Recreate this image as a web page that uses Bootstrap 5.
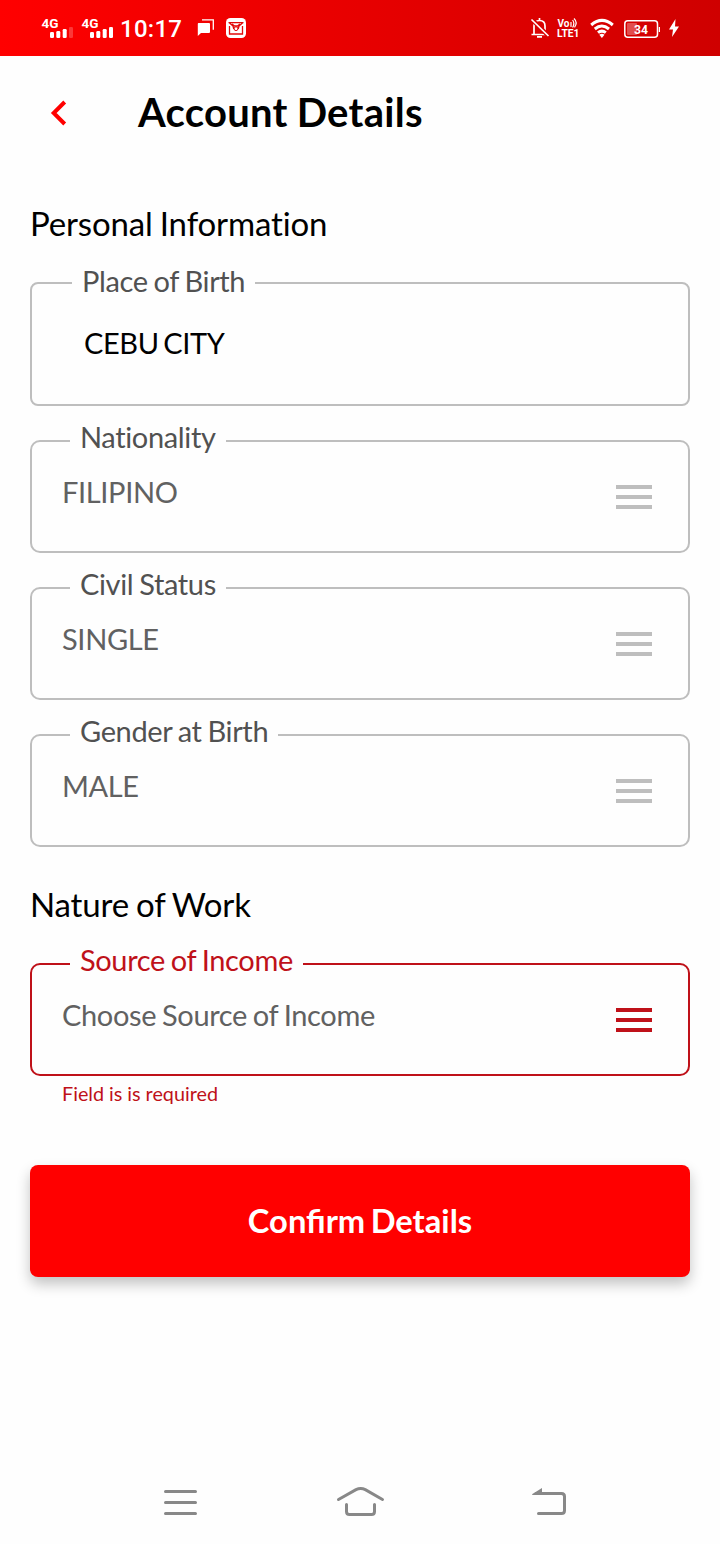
<!DOCTYPE html>
<html lang="en">
<head>
<meta charset="utf-8">
<meta name="viewport" content="width=device-width, initial-scale=1">
<title>Account Details</title>
<link href="https://cdn.jsdelivr.net/npm/bootstrap@5.3.0/dist/css/bootstrap.min.css" rel="stylesheet">
<style>
  body { font-family: Lato, sans-serif; color: #000; background: #fefefe; height: 1544px; overflow: hidden; }
  .status { height: 56px; background: linear-gradient(90deg, #ff0000, #cf0000); }
  .status svg, .tabs svg { display: block; }
  .status text { font-family: Roboto, sans-serif; fill: #fff; }
  .topbar { height: 112px; padding-left: 46px; }
  .topbar h1 { font-size: 40px; font-weight: 700; line-height: 48px; margin: 0 0 0 67px; letter-spacing: .27px; word-spacing: -1px; }
  .page-body { padding: 0 30px; }
  .group-title { font-size: 33px; font-weight: 400; line-height: 110px; margin: 0; padding-bottom: 4px; letter-spacing: -.14px; word-spacing: -1.3px; }
  .group-title.work { line-height: 114px; padding-bottom: 2px; }
  .field { height: 113px; border: 2px solid #bebebe; border-radius: 10px; margin-bottom: 34px; padding: 0 36px 0 30px; color: #616161; font-size: 29px; letter-spacing: -.36px; word-spacing: -1.2px; }
  .field label { position: absolute; left: 38px; top: -23px; line-height: 36px; padding: 0 10px; background: #fefefe; color: #515151; white-space: nowrap; }
  .field .val { line-height: 36px; margin-top: -10px; }
  .field svg { margin-top: 1px; fill: #bebebe; }
  .field.tall { height: 124px; border-radius: 8px; padding-left: 52px; color: #000; }
  .field.tall label { left: 40px; top: -21px; }
  .field.tall .val { margin-top: -2px; letter-spacing: -.4px; word-spacing: -2.4px; }
  .field.bad { border-color: #bf1119; margin-bottom: 0; }
  .field.bad label { color: #bf1119; }
  .field.bad svg { fill: #bf1119; }
  .error { font-size: 19.800px; line-height: 34px; color: #bf1119; padding-left: 32px; margin: 0 0 55px; word-spacing: -.1px; }
  .btn-confirm, .btn-confirm:hover { height: 112px; border: 0; border-radius: 8px; background: #f00; color: #fff; font-size: 32.700px; font-weight: 700; word-spacing: -2.500px; box-shadow: 0 7px 14px rgba(0,0,0,.24); }
  .tabs { height: 84px; padding: 0 150px 0 160px; }
</style>
</head>
<body class="d-flex flex-column">
<header class="status">
  <svg width="720" height="56" viewBox="0 0 720 56">
    <text x="41.500" y="28" font-size="13.500" font-weight="700" textLength="17" lengthAdjust="spacingAndGlyphs">4G</text>
    <g fill="#fff">
      <rect x="50" y="32" width="4" height="6" rx="1.3"/><rect x="56.300" y="31" width="4" height="7" rx="1.3"/><rect x="62.700" y="29" width="4" height="9" rx="1.3"/><rect x="69" y="27" width="4" height="11" rx="1.3" opacity=".22"/>
      <rect x="90" y="32" width="4" height="6" rx="1.3"/><rect x="96.300" y="31" width="4" height="7" rx="1.3"/><rect x="102.700" y="29" width="4" height="9" rx="1.3"/><rect x="109" y="27" width="4" height="11" rx="1.3"/>
    </g>
    <text x="81.500" y="28" font-size="13.500" font-weight="700" textLength="17" lengthAdjust="spacingAndGlyphs">4G</text>
    <text x="120" y="37" font-size="24" font-weight="500" textLength="62">10:17</text>
    <!-- message -->
    <path d="M198.500 23h10.500q1 0 1 1v8q0 1-1 1h-8l-3.200 3v-12q0-1 .7-1z" fill="#fff"/>
    <path d="M202 19.800h11.300v10" fill="none" stroke="#fff" stroke-width="1.300"/>
    <!-- mail -->
    <rect x="226" y="18" width="20" height="20" rx="4.500" fill="#fff"/>
    <path d="M228.500 22.700h15M229.500 26v8h13v-8M229.500 23l3.500 3 .8 3M242.500 23l-3.500 3-.8 3M232 24l2.500 2h3l2.500-2" fill="none" stroke="#e20a0a" stroke-width="1.300"/>
    <circle cx="236" cy="28.700" r="1.900" fill="none" stroke="#e20a0a"/>
    <!-- muted bell -->
    <g fill="none" stroke="#fff" stroke-width="1.700">
      <path d="M534 34v-8q0-5.500 5.500-5.500T545 26v8M531.500 34.500h16.500M539.500 18v2.500M537 36.800h5"/>
      <path d="M531 18.500l17.500 17.500" stroke="#d90000" stroke-width="4.500"/>
      <path d="M531.500 19.500l17 16.500"/>
    </g>
    <text font-weight="700"><tspan x="557.500" y="27" font-size="10">Vo</tspan><tspan x="557" y="37" font-size="10.500" textLength="22.500" lengthAdjust="spacingAndGlyphs">LTE1</tspan></text>
    <path d="M571 22v5M572.600 20q2.500 3.500 0 7.500M574 18.500q4 4 .5 8.800" fill="none" stroke="#fff" stroke-width="1.200"/>
    <!-- wifi -->
    <g fill="none" stroke="#fff" stroke-width="3">
      <path d="M591.200 25q10.800-9.200 21.600 0M594.800 29q7-6 14.200 0M598 32.700q3.900-3.200 7.800 0"/>
    </g>
    <path d="M599.300 34.700q2.600-1.700 5.200 0l-2.600 3.300z" fill="#fff"/>
    <!-- battery -->
    <rect x="624.800" y="20.800" width="32.700" height="16.400" rx="3" fill="none" stroke="#fff" stroke-width="1.500"/>
    <rect x="627" y="23" width="10" height="12" rx="1" fill="#fff" opacity=".3"/>
    <rect x="658.800" y="27" width="1.200" height="5" fill="#fff"/>
    <text x="641" y="34" font-size="12.500" font-weight="700" text-anchor="middle" textLength="14" lengthAdjust="spacingAndGlyphs">34</text>
    <path d="M675.500 19l-6.500 10.500h4l-1 7.500 7-10.500h-4z" fill="#fff"/>
  </svg>
</header>

<nav class="topbar d-flex align-items-center">
  <svg width="25" height="30" viewBox="0 0 25 30"><path d="M18.700 5L7.700 16l11 11" fill="none" stroke="#f00" stroke-width="4"/></svg>
  <h1>Account Details</h1>
</nav>

<main class="page-body flex-grow-1">
  <h2 class="group-title">Personal Information</h2>
  <div class="field tall position-relative d-flex align-items-center"><label>Place of Birth</label><span class="val">CEBU CITY</span></div>
  <div class="field position-relative d-flex align-items-center justify-content-between"><label>Nationality</label><span class="val">FILIPINO</span>
    <svg width="36" height="24"><path d="M0 0h36v4H0zM0 10h36v4H0zM0 20h36v4H0z"/></svg></div>
  <div class="field position-relative d-flex align-items-center justify-content-between"><label>Civil Status</label><span class="val">SINGLE</span>
    <svg width="36" height="24"><path d="M0 0h36v4H0zM0 10h36v4H0zM0 20h36v4H0z"/></svg></div>
  <div class="field mb-0 position-relative d-flex align-items-center justify-content-between"><label>Gender at Birth</label><span class="val">MALE</span>
    <svg width="36" height="24"><path d="M0 0h36v4H0zM0 10h36v4H0zM0 20h36v4H0z"/></svg></div>
  <h2 class="group-title work">Nature of Work</h2>
  <div class="field bad position-relative d-flex align-items-center justify-content-between"><label>Source of Income</label><span class="val">Choose Source of Income</span>
    <svg width="36" height="24"><path d="M0 0h36v4H0zM0 10h36v4H0zM0 20h36v4H0z"/></svg></div>
  <p class="error">Field is is required</p>
  <button type="button" class="btn btn-confirm w-100">Confirm Details</button>
</main>

<footer class="tabs d-flex align-items-center justify-content-between">
  <svg width="40" height="40" viewBox="160 1482 40 40"><path d="M165.500 1491.500h30M165.500 1502.500h30M165.500 1513.500h30" stroke="#888" stroke-width="3" stroke-linecap="round"/></svg>
  <svg width="52" height="40" viewBox="334 1482 52 40"><path d="M338.500 1499.500l17.500-9.800q4.700-2.200 9.300 0l17.200 9.800M346.500 1504.500v7q0 3 3 3h22q3 0 3-3v-7" fill="none" stroke="#888" stroke-width="3" stroke-linecap="round"/></svg>
  <svg width="50" height="40" viewBox="520 1482 50 40"><path d="M536 1493.500h25.500q3 0 3 3v14q0 3-3 3h-23" fill="none" stroke="#888" stroke-width="3" stroke-linecap="round"/><path d="M532 1494.200l10-6.200v7h-9.500z" fill="#888"/></svg>
</footer>
<script src="https://cdn.jsdelivr.net/npm/bootstrap@5.3.0/dist/js/bootstrap.bundle.min.js"></script>
</body>
</html>
